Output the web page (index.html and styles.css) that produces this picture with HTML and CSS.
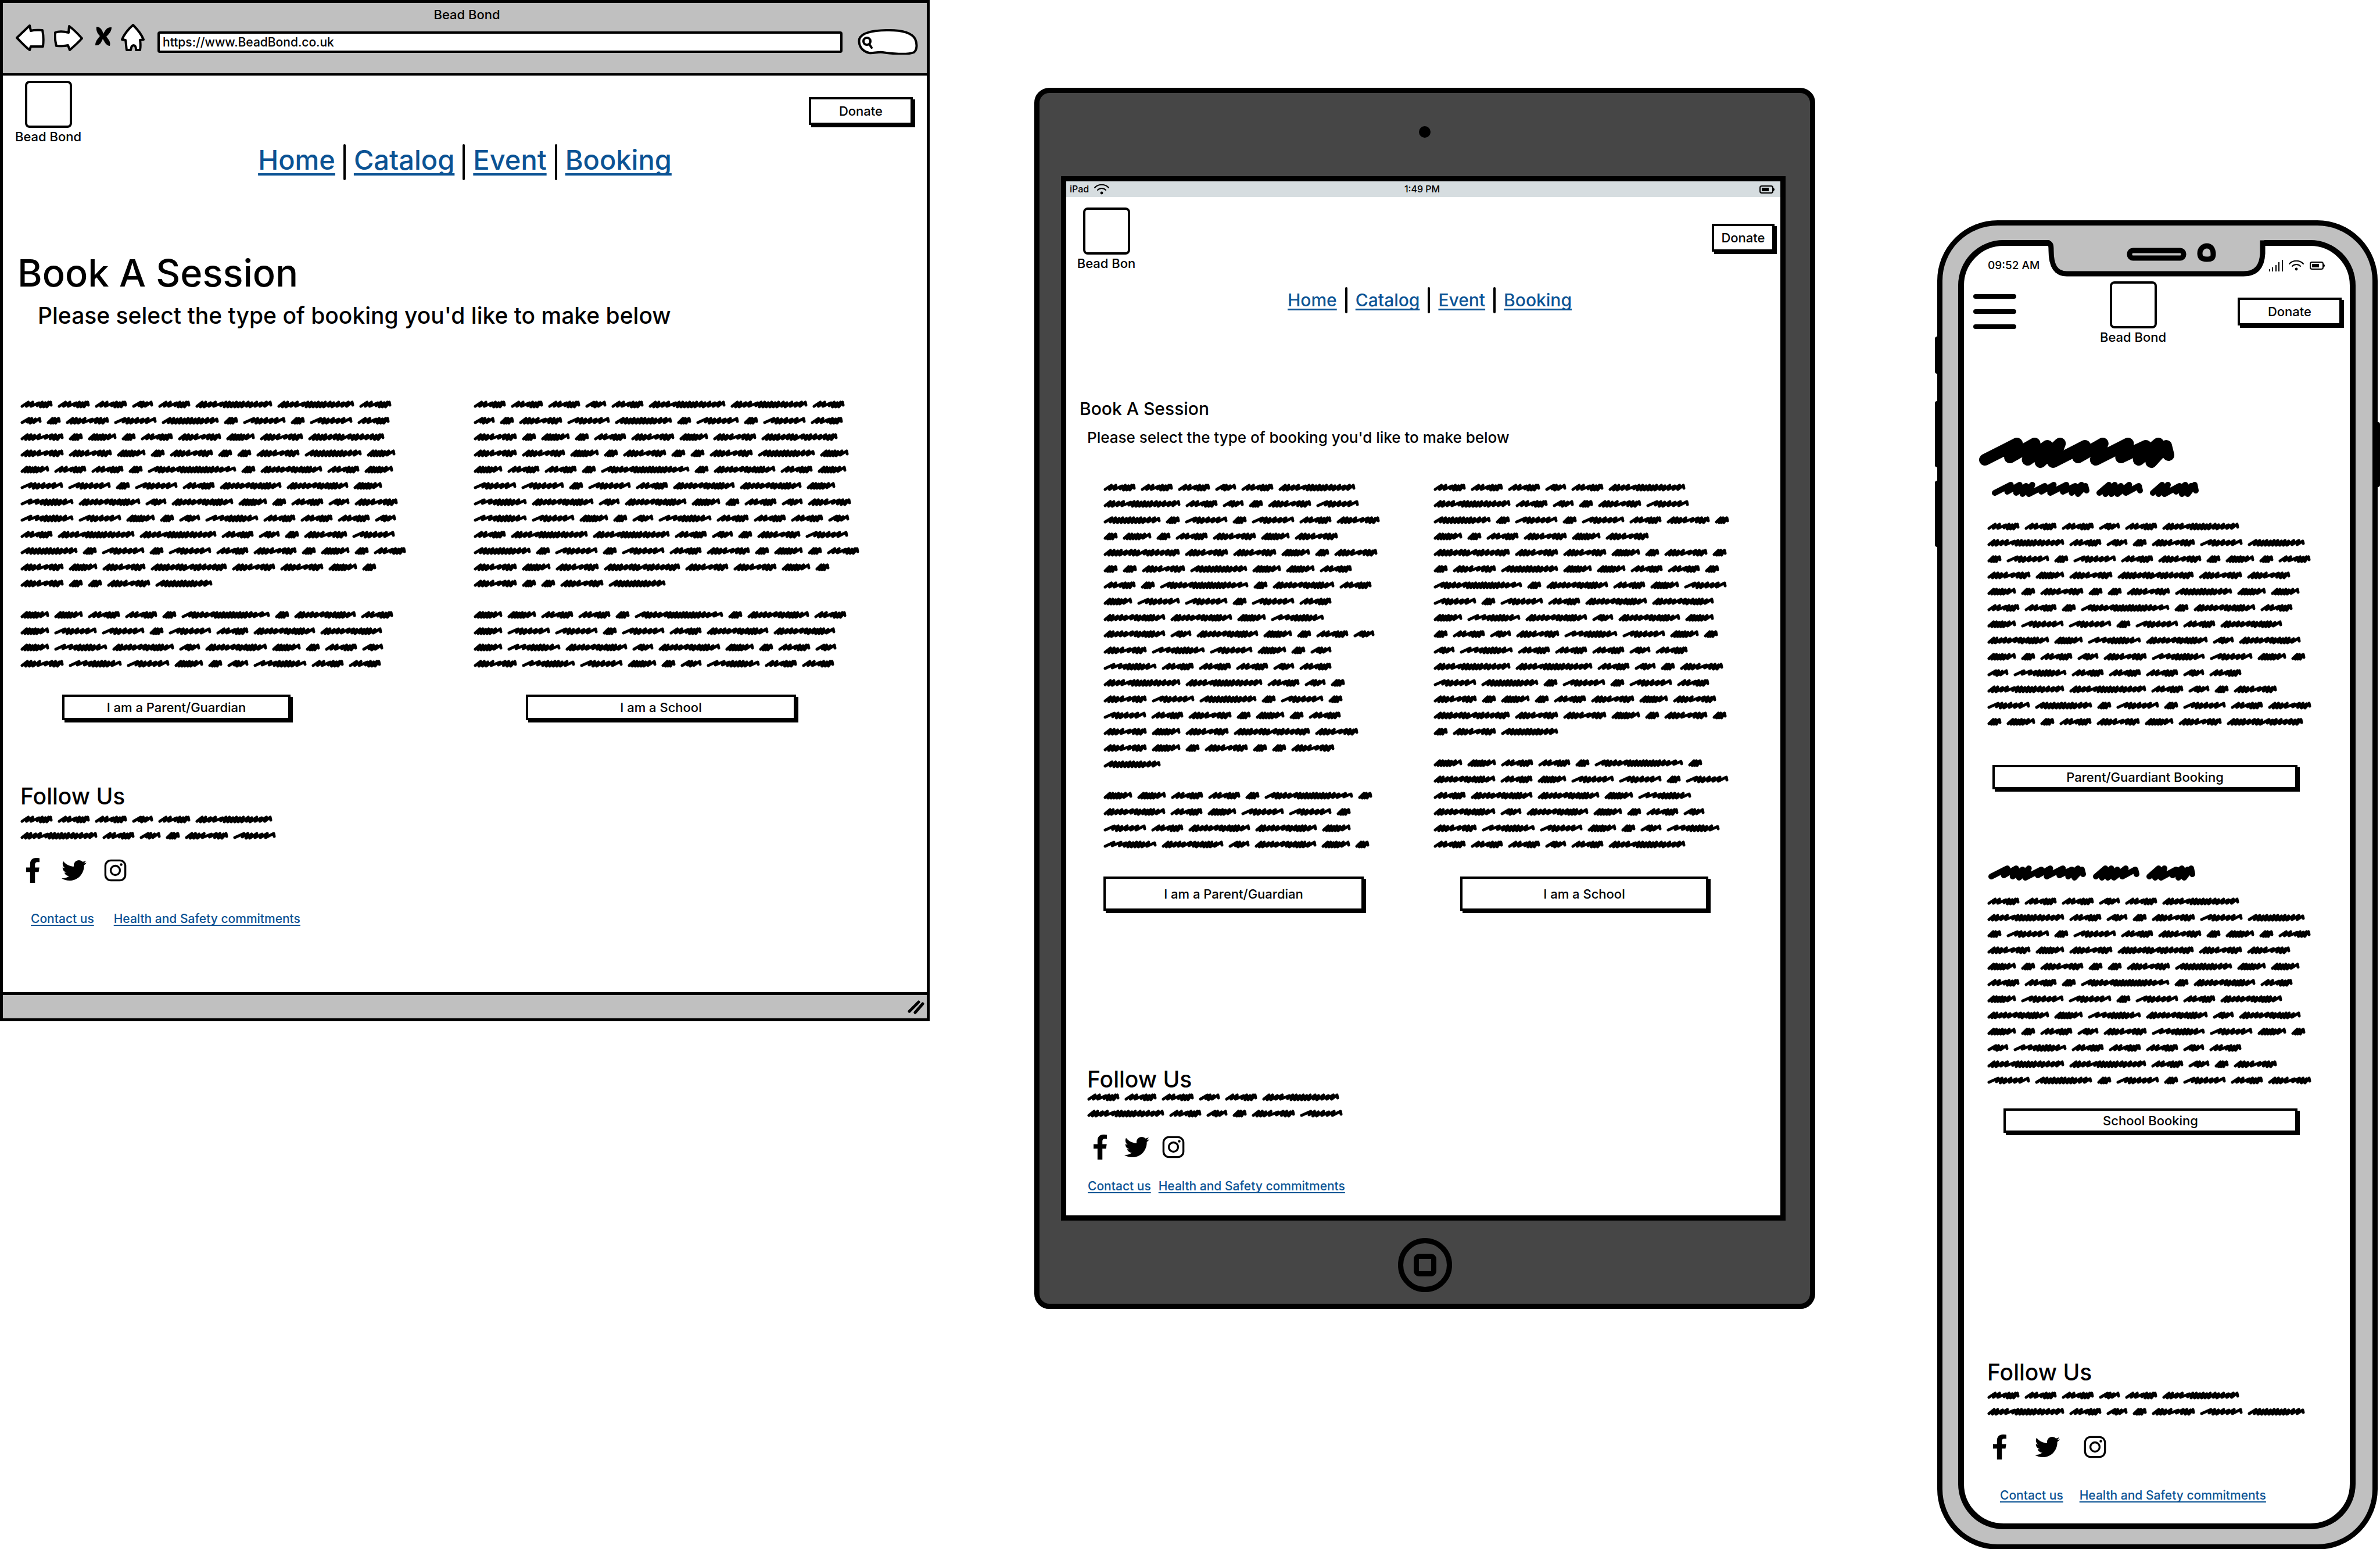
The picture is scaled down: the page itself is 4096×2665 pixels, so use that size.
FILE: index.html
```
<!DOCTYPE html>
<html lang="en">
<head>
<meta charset="utf-8">
<title>Bead Bond – Book A Session</title>
<link rel="stylesheet" href="styles.css">
</head>
<body>
<svg class="sprite" aria-hidden="true">
  <symbol id="facebook" viewBox="0 0 320 512"><path d="M279.14 288l14.22-92.66h-88.91v-60.13c0-25.35 12.42-50.06 52.24-50.06h40.42V6.26S260.43 0 225.36 0c-73.22 0-121.08 44.38-121.08 124.72v70.62H22.89V288h81.39v224h100.17V288z"/></symbol>
  <symbol id="twitter" viewBox="0 0 512 512"><path d="M459.37 151.716c.325 4.548.325 9.097.325 13.645 0 138.72-105.583 298.558-298.558 298.558-59.452 0-114.68-17.219-161.137-47.106 8.447.974 16.568 1.299 25.34 1.299 49.055 0 94.213-16.568 130.274-44.832-46.132-.975-84.792-31.188-98.112-72.772 6.498.974 12.995 1.624 19.818 1.624 9.421 0 18.843-1.3 27.614-3.573-48.081-9.747-84.143-51.98-84.143-102.985v-1.299c13.969 7.797 30.214 12.67 47.431 13.319-28.264-18.843-46.781-51.005-46.781-87.391 0-19.492 5.197-37.36 14.294-52.954 51.655 63.675 129.3 105.258 216.365 109.807-1.624-7.797-2.599-15.918-2.599-24.04 0-57.828 46.782-104.934 104.934-104.934 30.213 0 57.502 12.67 76.67 33.137 23.715-4.548 46.456-13.32 66.599-25.34-7.798 24.366-24.366 44.833-46.132 57.827 21.117-2.273 41.584-8.122 60.426-16.243-14.292 20.791-32.161 39.308-52.628 54.253z"/></symbol>
  <symbol id="instagram" viewBox="0 0 448 512"><g fill="none" stroke="currentColor" stroke-width="40"><rect x="20" y="52" width="408" height="408" rx="112"/><circle cx="224" cy="256" r="95"/></g><circle cx="343" cy="137" r="27"/></symbol>
  <symbol id="wifi" viewBox="0 0 26 18"><g fill="none" stroke="currentColor" stroke-width="2" stroke-linecap="round"><path d="M1 6C7-1 19-1 25 6"/><path d="M6 10c4-4 10-4 14 0"/></g><circle cx="13" cy="15" r="2.4"/></symbol>
  <symbol id="battery" viewBox="0 0 26 16"><rect x="1" y="2" width="22" height="12" rx="3" fill="none" stroke="currentColor" stroke-width="2"/><rect x="4" y="5" width="12" height="6"/><path d="M24 5l2 2v2l-2 2z"/></symbol>
</svg>

<main class="board">
  <section class="browser" aria-label="Desktop layout">
    <div class="chrome">
      <div class="chrome-title">Bead Bond</div>
      <div class="toolbar">
        <button class="tool" aria-label="Back"><svg width="52" height="48" viewBox="0 0 52 48"><path d="M2 25L24 4l2 9c7-2 13-1 20-1 2 9 2 19 1 28H26l-2 6C16 40 9 32 2 25z"/></svg></button>
        <button class="tool" aria-label="Forward"><svg width="54" height="48" viewBox="0 0 54 48"><path d="M2 16c7-3 15-2 23 0l1-11c8 6 15 13 22 21-7 8-14 14-21 20l-3-8c-7 2-13 1-20 1C2 31 1 23 2 16z"/></svg></button>
        <button class="tool" aria-label="Stop"><svg width="32" height="48" viewBox="0 0 32 48"><path class="solid" d="M5 6c7 0 10 6 12 12 3-6 6-12 14-11 0 7-4 11-9 16 4 5 8 9 6 16-7-1-9-7-12-12-3 6-5 12-13 11 0-7 4-11 8-16C7 18 4 13 5 6z"/></svg></button>
        <button class="tool" aria-label="Home"><svg width="42" height="48" viewBox="0 0 42 48"><path d="M22 3c7 7 14 15 18 25l-6 1c1 6 1 11 0 17h-7c0-5-1-8-4-8-4 0-4 4-5 8h-7c-1-6-1-12-2-17l-6-1C7 18 14 10 22 3z"/></svg></button>
        <input class="url" type="text" aria-label="Address" value="https://www.BeadBond.co.uk">
        <label class="search"><svg width="104" height="44" viewBox="0 0 104 44" aria-hidden="true"><path class="blob" d="M20 41C6 38 1 27 3 17 7 6 28 2 54 2c26 0 40 6 45 15 4 9 3 19-2 23-10 4-32 3-54 0-8-1-17 2-23 1z"/><path class="lens" d="M10 21c0-8 12-8 12 0s-12 8-12 0zM20 26l4 6"/></svg><input type="search" aria-label="Search"></label>
      </div>
    </div>
    <div class="page">
      <header class="site-header">
        <div class="logo"><span class="logo-box"></span><span class="logo-name">Bead Bond</span></div>
        <button class="sketch donate">Donate</button>
      </header>
      <nav class="nav" aria-label="Main"><a href="#">Home</a><a href="#">Catalog</a><a href="#">Event</a><a href="#">Booking</a></nav>
      <h1>Book A Session</h1>
      <p class="lead">Please select the type of booking you'd like to make below</p>
      <div class="choices">
        <div class="choice">
          <div class="scribble" data-words="dddbdjjdbafehaeaedfacadfcflffcafaafhccddakaidceeaediicgibicadbfgecabgdddbdjjdbafehaeaedfacadfcflffcafaafh"></div>
          <div class="scribble" data-words="ccddakaidceeaediicgibicadbfgecabgdd"></div>
          <button class="sketch">I am a Parent/Guardian</button>
        </div>
        <div class="choice">
          <div class="scribble" data-words="dddbdjjdbafehaeaedfacadfcflffcafaafhccddakaidceeaediicgibicadbfgecabgdddbdjjdbafehaeaedfacadfcflffcafaafh"></div>
          <div class="scribble" data-words="ccddakaidceeaediicgibicadbfgecabgdd"></div>
          <button class="sketch">I am a School</button>
        </div>
      </div>
      <footer class="site-footer">
        <h2>Follow Us</h2>
        <div class="scribble" data-words="dddbdjjdbafe"></div>
        <div class="social">
          <a href="#" aria-label="Facebook"><svg><use href="#facebook"/></svg></a>
          <a href="#" aria-label="Twitter"><svg><use href="#twitter"/></svg></a>
          <a href="#" aria-label="Instagram"><svg><use href="#instagram"/></svg></a>
        </div>
        <div class="links"><a href="#">Contact us</a><a href="#">Health and Safety commitments</a></div>
      </footer>
    </div>
    <div class="window-foot"><svg width="30" height="28" viewBox="0 0 30 28" aria-hidden="true"><path d="M4 22L20 6M14 24L27 9"/></svg></div>
  </section>

  <section class="tablet" aria-label="Tablet layout">
    <div class="bezel"><span class="camera"></span></div>
    <div class="screen">
      <div class="status"><span class="carrier">iPad <svg class="wifi"><use href="#wifi"/></svg></span><span>1:49 PM</span><svg class="battery"><use href="#battery"/></svg></div>
      <header class="site-header">
        <div class="logo"><span class="logo-box"></span><span class="logo-name">Bead Bon</span></div>
        <button class="sketch donate">Donate</button>
      </header>
      <nav class="nav" aria-label="Main"><a href="#">Home</a><a href="#">Catalog</a><a href="#">Event</a><a href="#">Booking</a></nav>
      <h1>Book A Session</h1>
      <p class="lead">Please select the type of booking you'd like to make below</p>
      <div class="choices">
        <div class="choice">
          <div class="scribble" data-words="dddbdjjdbafehaeaedfacadfcflffcafaafhccddakaidceeaediicgibicadbfgecabgdddbdjjdbafehaeaedfacadfcflffcafaafh"></div>
          <div class="scribble" data-words="ccddakaidceeaediicgibica"></div>
          <button class="sketch">I am a Parent/Guardian</button>
        </div>
        <div class="choice">
          <div class="scribble" data-words="dddbdjjdbafehaeaedfacadfcflffcafaafhccddakaidceeaediicgibicadbfgecabgdddbdjjdbafehaeaedfacadfcflffcafaafh"></div>
          <div class="scribble" data-words="ccddakaidceeaediicgibicadbfgecabgdddbdj"></div>
          <button class="sketch">I am a School</button>
        </div>
      </div>
      <footer class="site-footer">
        <h2>Follow Us</h2>
        <div class="scribble" data-words="dddbdjjdbafe"></div>
        <div class="social">
          <a href="#" aria-label="Facebook"><svg><use href="#facebook"/></svg></a>
          <a href="#" aria-label="Twitter"><svg><use href="#twitter"/></svg></a>
          <a href="#" aria-label="Instagram"><svg><use href="#instagram"/></svg></a>
        </div>
        <div class="links"><a href="#">Contact us</a><a href="#">Health and Safety commitments</a></div>
      </footer>
    </div>
    <div class="bezel"><button class="home-button" aria-label="Home button"></button></div>
  </section>

  <section class="phone" aria-label="Phone layout">
    <span class="side mute"></span><span class="side up"></span><span class="side down"></span><span class="side power"></span>
    <div class="screen">
      <svg class="notch" width="392" height="66" viewBox="0 0 392 66" aria-hidden="true">
        <path fill="#c0c0c0" d="M14 0L17 20C17 45 24 60 44 60H348C372 60 380 45 381 25L384 0Z"/>
        <g fill="none" stroke="#000" stroke-width="9">
          <path d="M0 7H10C17 7 17 12 17 20C17 45 24 60 44 60H348C372 60 380 45 381 25V7H392"/>
          <rect x="152" y="20" width="93" height="13" rx="6"/>
          <path d="M285 12c7 0 11 6 11 14s-4 9-11 9-12-2-12-10 6-13 12-13z"/>
        </g>
      </svg>
      <div class="status"><span>09:52 AM</span><span class="signals"><svg class="bars" width="24" height="22" viewBox="0 0 24 22" aria-hidden="true"><path d="M1 21v-4M6 21v-7M12 21V10M17 21V5M23 21V1"/></svg><svg class="wifi"><use href="#wifi"/></svg><svg class="battery"><use href="#battery"/></svg></span></div>
      <header class="site-header">
        <button class="menu" aria-label="Menu"><span></span><span></span><span></span></button>
        <div class="logo"><span class="logo-box"></span><span class="logo-name">Bead Bond</span></div>
        <button class="sketch donate">Donate</button>
      </header>
      <div class="scribble scribble-title" data-words="m" data-scale="4"></div>
      <div class="scribble scribble-sub first" data-words="mno" data-scale="2"></div>
      <div class="choice">
        <div class="scribble" data-words="dddbdjjdbafehaeaedfacadfcflffcafaafhccddakaidceeaediicgibicadbfgecabgdddbdjjdbafehaeaedfacadfcfl"></div>
        <button class="sketch">Parent/Guardiant Booking</button>
      </div>
      <div class="scribble scribble-sub" data-words="mno" data-scale="2"></div>
      <div class="choice second">
        <div class="scribble" data-words="dddbdjjdbafehaeaedfacadfcflffcafaafhccddakaidceeaediicgibicadbfgecabgdddbdjjdbafehaeaedf"></div>
        <button class="sketch">School Booking</button>
      </div>
      <footer class="site-footer">
        <h2>Follow Us</h2>
        <div class="scribble" data-words="dddbdjjdbafeh"></div>
        <div class="social">
          <a href="#" aria-label="Facebook"><svg><use href="#facebook"/></svg></a>
          <a href="#" aria-label="Twitter"><svg><use href="#twitter"/></svg></a>
          <a href="#" aria-label="Instagram"><svg><use href="#instagram"/></svg></a>
        </div>
        <div class="links"><a href="#">Contact us</a><a href="#">Health and Safety commitments</a></div>
      </footer>
    </div>
  </section>
</main>
<script src="scribble.js"></script>
</body>
</html>
```

FILE: styles.css
```
* { box-sizing: border-box; margin: 0; padding: 0; }

body {
  background: #fff;
  color: #000;
  font-family: Inter, "Open Sans", "Liberation Sans", sans-serif;
  font-size: 22px;
  font-weight: 500;
  line-height: 28px;
}

button, input { font: inherit; color: inherit; background: none; border: 0; outline: 0; }
svg { display: block; }
h1, h2 { font-weight: 500; }
.sprite { display: none; }

.board {
  display: grid;
  grid-template-columns: 1600fr 180fr 1344fr 209fr 763fr;
  align-items: start;
}
.browser { grid-column: 1; }
.tablet { grid-column: 3; }
.phone { grid-column: 5; }

/* Placeholder handwriting */
.scribble { display: flex; flex-wrap: wrap; gap: 14px 8px; padding: 7px 0; }
.scribble path { fill: none; stroke: #000; stroke-width: 5; stroke-linecap: round; stroke-linejoin: round; }

/* Shared page parts */
.site-header { display: flex; align-items: flex-start; }
.logo { width: 114px; display: flex; flex-direction: column; align-items: center; gap: 2px; }
.logo-box { width: 81px; height: 81px; border: 4px solid #000; border-radius: 8px; }
.logo-name { line-height: 26px; white-space: nowrap; }

.sketch {
  display: block;
  background: #fff;
  border: 4px solid #000;
  box-shadow: 4px 4px 0 #000;
  text-align: center;
  white-space: nowrap;
}
.donate { width: 179px; height: 48px; margin: 28px 0 0 auto; }

.nav { display: flex; justify-content: center; }
.nav a { color: #0b5394; text-decoration-skip-ink: none; }
.nav a + a::before {
  content: "";
  float: left;
  width: 4px;
  margin: 0 14px;
  background: #000;
  border-radius: 2px;
}

.choices { display: grid; }
.choice .scribble + .scribble { margin-top: 26px; }

.site-footer h2 { font-size: 39px; line-height: 34px; }
.social { display: grid; width: max-content; }
.social a { color: #000; height: 44px; display: flex; justify-content: center; }
.social svg { width: 43px; height: 43px; fill: currentColor; }
.links { display: flex; font-size: 21px; }
.links a, .nav a { text-decoration-line: underline; }
.links a { color: #0b5394; text-decoration-thickness: 2px; text-underline-offset: 3px; text-decoration-skip-ink: none; white-space: nowrap; }

.wifi { width: 26px; height: 18px; }
.battery { width: 26px; height: 16px; }

/* Browser window */
.browser { border: 5px solid #000; }
.chrome { background: #c0c0c0; border-bottom: 4px solid #000; padding: 6px 15px 32px 22px; }
.chrome-title { text-align: center; line-height: 29px; }
.toolbar { display: flex; align-items: flex-start; gap: 14px; height: 54px; }
.tool path { fill: #fff; stroke: #000; stroke-width: 4; stroke-linejoin: round; }
.tool .solid { fill: #000; stroke: none; }
.url { flex: 1; min-width: 0; height: 37px; margin: 14px 12px 0 8px; padding-left: 5px; background: #fff; border: 4px solid #000; border-radius: 4px; font-size: 21px; }
.search { position: relative; margin-top: 10px; width: 104px; height: 44px; }
.search svg { position: absolute; inset: 0; }
.search .blob { fill: #fff; stroke: #000; stroke-width: 4; }
.search .lens { fill: none; stroke: #000; stroke-width: 4; stroke-linecap: round; }
.search input { position: relative; width: 70px; height: 36px; margin-left: 28px; }

.browser .site-header { padding: 9px 24px 0 21px; }
.browser .nav { font-size: 47px; line-height: 54px; }
.browser .nav a { text-decoration-thickness: 4px; text-underline-offset: 6px; }
.browser .nav a + a::before { height: 62px; }
.browser h1 { margin: 122px 0 0 25px; font-size: 65px; line-height: 76px; }
.browser .lead { margin: 10px 0 0 60px; font-size: 39px; line-height: 50px; }
.browser .choices { margin: 114px 0 0 30px; grid-template-columns: 780fr 780fr; }
.browser .choice .scribble { max-width: 676px; }
.browser .choice .sketch { width: 393px; height: 44px; margin: 39px 0 0 72px; }
.browser .choice + .choice .sketch { width: 465px; margin-left: 90px; }
.browser .site-footer { padding: 114px 0 112px 30px; }
.browser .site-footer .scribble { max-width: 500px; margin-top: 9px; }
.browser .social { grid-template-columns: repeat(3, 71px); margin: 24px 0 0 -14px; }
.browser .links { gap: 34px; margin: 47px 0 0 18px; }
.window-foot { height: 45px; background: #c0c0c0; border-top: 5px solid #000; display: flex; justify-content: flex-end; align-items: center; padding-right: 4px; }
.window-foot path { stroke: #000; stroke-width: 5; stroke-linecap: round; }

/* Tablet */
.tablet { margin-top: 151px; background: #464646; border: 9px solid #000; border-radius: 26px; padding: 0 42px 0 37px; }
.tablet .screen { background: #fff; border: 9px solid #000; padding-bottom: 36px; }
.bezel { height: 143px; display: flex; justify-content: center; align-items: flex-start; padding-left: 5px; }
.camera { width: 20px; height: 20px; margin-top: 57px; border-radius: 50%; background: #000; }
.home-button { width: 93px; height: 93px; margin-top: 30px; border: 9px solid #000; border-radius: 50%; display: flex; align-items: center; justify-content: center; }
.home-button::before { content: ""; width: 21px; height: 21px; border: 9px solid #000; border-radius: 9px; }
.tablet .status { display: grid; grid-template-columns: 1fr auto 1fr; align-items: center; height: 27px; padding: 0 10px 0 6px; background: #d6dde0; font-size: 16px; line-height: 27px; }
.carrier { display: flex; align-items: center; gap: 9px; }
.tablet .battery { justify-self: end; }
.tablet .site-header { padding: 18px 10px 0 12px; }
.tablet .donate { width: 108px; padding: 0; }
.tablet .nav { margin-top: 28px; padding-left: 22px; font-size: 30px; line-height: 44px; }
.tablet .nav a { text-decoration-thickness: 3px; text-underline-offset: 4px; }
.tablet .nav a + a::before { height: 45px; }
.tablet h1 { margin: 146px 0 0 23px; font-size: 30px; line-height: 36px; }
.tablet .lead { margin: 14px 0 0 36px; font-size: 26px; line-height: 36px; }
.tablet .choices { margin: 54px 0 0 64px; grid-template-columns: 568fr 597fr; }
.tablet .choice .scribble { max-width: 488px; }
.tablet .choice + .choice .scribble { max-width: 510px; }
.tablet .choice .sketch { width: 448px; height: 59px; margin-top: 41px; }
.tablet .choice + .choice .sketch { width: 427px; margin-left: 46px; }
.tablet .site-footer { padding: 273px 0 0 36px; }
.tablet .site-footer .scribble { max-width: 500px; }
.tablet .social { grid-template-columns: repeat(3, 63px); margin: 22px 0 0 -9px; }
.tablet .links { gap: 13px; margin: 31px 0 0 1px; }

/* Phone */
.phone { position: relative; margin: 379px 4px 0 1px; background: #c0c0c0; border: 9px solid #000; border-radius: 104px; padding: 25px 29px 26px 27px; }
.phone .screen { position: relative; background: #fff; border: 10px solid #000; border-radius: 78px; padding: 20px 0 34px; }
.notch { position: absolute; left: 133px; top: -12px; }
.side { position: absolute; left: -13px; width: 8px; background: #000; border-radius: 4px 0 0 4px; }
.mute { top: 191px; height: 64px; }
.up { top: 302px; height: 114px; }
.down { top: 439px; height: 114px; }
.power { left: auto; right: -13px; top: 338px; height: 112px; border-radius: 0 4px 4px 0; }
.phone .status { display: flex; justify-content: space-between; height: 28px; padding: 0 43px 0 41px; font-size: 19px; }
.signals { display: flex; align-items: center; gap: 10px; }
.bars path { fill: none; stroke: #000; stroke-width: 2; }
.phone .site-header { margin-top: 13px; padding: 0 14px 0 16px; }
.menu { width: 74px; margin: 22px 144px 0 0; display: grid; gap: 18px; }
.menu span { height: 8px; border-radius: 4px; background: #000; }
.scribble-title { margin: 158px 0 0 24px; padding: 0; }
.scribble-sub { margin: 130px 0 0 41px; padding: 0; gap: 10px; }
.scribble-sub.first { margin: 21px 0 0 47px; }
.phone .choice { margin: 36px 0 0 40px; }
.phone .choice.second { margin-top: 21px; }
.phone .choice .scribble { max-width: 568px; }
.phone .choice .sketch { width: 525px; height: 42px; margin: 60px 0 0 9px; }
.phone .choice.second .sketch { width: 506px; margin: 34px 0 0 28px; }
.phone .site-footer { padding: 395px 0 0 40px; }
.phone .site-footer .scribble { max-width: 568px; margin-top: 9px; }
.phone .social { grid-template-columns: repeat(3, 82px); margin: 25px 0 0 -20px; }
.phone .links { gap: 28px; margin: 47px 0 0 22px; }
```

FILE: scribble.js
```
// Each letter names one scribbled word: its width and its run of
// long (L), medium (M) and dense (D) pen strokes.
const WORDS = {
  a: [25, "DDDD"],
  b: [37, "LDML"],
  c: [50, "DDDDDML"],
  d: [56, "MMLDDDD"],
  e: [74, "LDDMMML"],
  f: [75, "DDDMLMDDD"],
  g: [92, "LLMDDDDDML"],
  h: [99, "MDDDDDDDDDMMM"],
  i: [107, "DDMMMLMDMDDDML"],
  j: [133, "DDMMLDDDDDDMDMMMM"],
  k: [153, "LDDMMLDDDDDDDDDDMMLL"],
  l: [132, "DDDDMMDDLDDMMMDDD"],
  m: [85, "LMDDLMLMDD"],
  n: [41, "DDDML"],
  o: [43, "DDLDDD"]
};
const ADVANCE = { L: 10, M: 7, D: 5 };
const PEAKS = [3, 3, 4, 3, 4];
const DEPTH = { L: 9, M: 10, D: 11 };

function wordPath(width, strokes) {
  const total = [...strokes].reduce((sum, s) => sum + ADVANCE[s], 0);
  const scale = (width - 8) / total;
  let x = 3;
  let d = "M3 10";
  [...strokes].forEach((s, i) => {
    x += ADVANCE[s] * scale;
    const last = i === strokes.length - 1;
    d += `L${(x + (last ? 1 : 3)).toFixed(1)} ${PEAKS[i % PEAKS.length]}`;
    d += last ? `L${(x + 2).toFixed(1)} 8` : `L${x.toFixed(1)} ${DEPTH[s]}`;
  });
  return d;
}

document.querySelectorAll(".scribble").forEach((block) => {
  const size = Number(block.dataset.scale || 1);
  block.setAttribute("role", "img");
  block.setAttribute("aria-label", "Placeholder text");
  block.innerHTML = [...block.dataset.words].map((key) => {
    const [width, strokes] = WORDS[key];
    return `<svg width="${width * size}" height="${14 * size}" viewBox="0 0 ${width} 14"><path d="${wordPath(width, strokes)}"/></svg>`;
  }).join("");
});
```
